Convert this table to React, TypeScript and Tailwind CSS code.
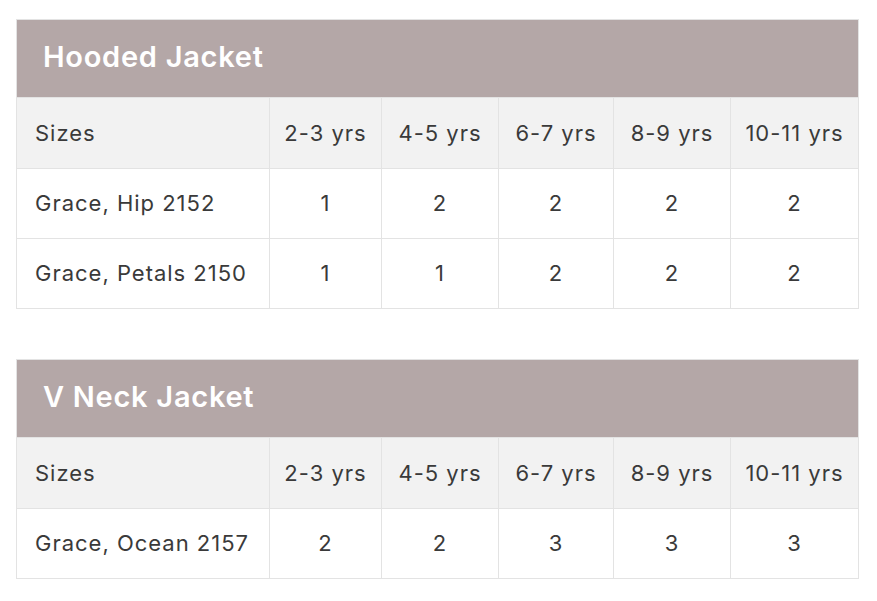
import React from "react";

type SizeTable = {
  title: string;
  cols: string[];
  rows: { name: string; values: number[] }[];
};

const tables: SizeTable[] = [
  {
    title: "Hooded Jacket",
    cols: ["2-3 yrs", "4-5 yrs", "6-7 yrs", "8-9 yrs", "10-11 yrs"],
    rows: [
      { name: "Grace, Hip 2152", values: [1, 2, 2, 2, 2] },
      { name: "Grace, Petals 2150", values: [1, 1, 2, 2, 2] },
    ],
  },
  {
    title: "V Neck Jacket",
    cols: ["2-3 yrs", "4-5 yrs", "6-7 yrs", "8-9 yrs", "10-11 yrs"],
    rows: [{ name: "Grace, Ocean 2157", values: [2, 2, 3, 3, 3] }],
  },
];

const colWidths = ["w-[253px]", "w-[112px]", "w-[117px]", "w-[115px]", "w-[117px]", "w-[128px]"];

function Table({ data }: { data: SizeTable }) {
  return (
    <table className="w-[842px] table-fixed border-collapse border border-[#e3e3e3] text-[22px] tracking-[0.045em] text-[#3a3a3a]">
      <colgroup>
        {colWidths.map((w) => (
          <col key={w} className={w} />
        ))}
      </colgroup>
      <thead>
        <tr>
          <th
            colSpan={6}
            className="h-[78px] bg-[#b4a7a7] pb-1 pl-[26px] text-left text-[29px] font-semibold tracking-[0.025em] text-white"
          >
            {data.title}
          </th>
        </tr>
      </thead>
      <tbody>
        <tr className="h-[71px] bg-[#f2f2f2]">
          <td className="border border-[#e3e3e3] pl-[18px] font-normal">Sizes</td>
          {data.cols.map((c) => (
            <td key={c} className="border border-[#e3e3e3] text-center">
              {c}
            </td>
          ))}
        </tr>
        {data.rows.map((r) => (
          <tr key={r.name} className="h-[70px] bg-white">
            <td className="border border-[#e3e3e3] pl-[18px] whitespace-nowrap">{r.name}</td>
            {r.values.map((v, i) => (
              <td key={i} className="border border-[#e3e3e3] text-center">
                {v}
              </td>
            ))}
          </tr>
        ))}
      </tbody>
    </table>
  );
}

export default function App() {
  return (
    <div className="min-h-[601px] bg-white pl-4 pt-[19px] font-['Inter',sans-serif]">
      <div className="flex flex-col gap-[50px]">
        {tables.map((t) => (
          <Table key={t.title} data={t} />
        ))}
      </div>
    </div>
  );
}
